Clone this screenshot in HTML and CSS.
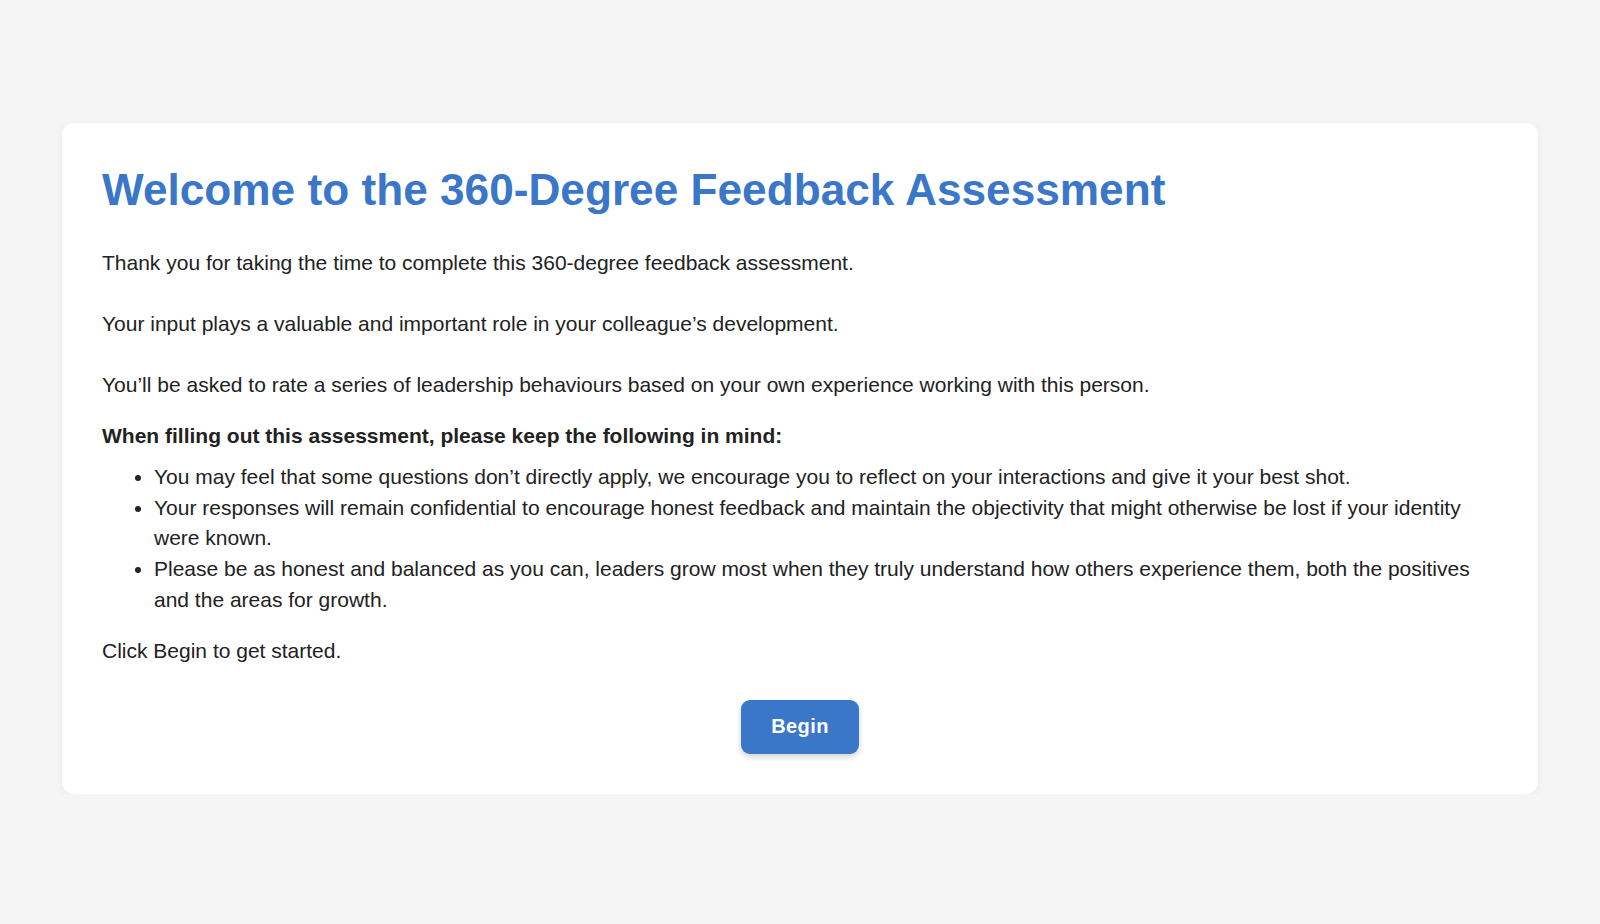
FILE: index.html
```html
<!DOCTYPE html>
<html lang="en">
<head>
<meta charset="utf-8">
<title>360-Degree Feedback Assessment</title>
<link rel="stylesheet" href="styles.css">
</head>
<body>
<main class="page">
  <section class="card">
    <h1 class="title">Welcome to the 360-Degree Feedback Assessment</h1>
    <p class="para">Thank you for taking the time to complete this 360-degree feedback assessment.</p>
    <p class="para">Your input plays a valuable and important role in your colleague’s development.</p>
    <p class="para para-last">You’ll be asked to rate a series of leadership behaviours based on your own experience working with this person.</p>
    <p class="lead">When filling out this assessment, please keep the following in mind:</p>
    <ul class="notes">
      <li>You may feel that some questions don’t directly apply, we encourage you to reflect on your interactions and give it your best shot.</li>
      <li>Your responses will remain confidential to encourage honest feedback and maintain the objectivity that might otherwise be lost if your identity were known.</li>
      <li>Please be as honest and balanced as you can, leaders grow most when they truly understand how others experience them, both the positives and the areas for growth.</li>
    </ul>
    <p class="cta-text">Click Begin to get started.</p>
    <div class="actions">
      <button class="begin" type="button">Begin</button>
    </div>
  </section>
</main>
</body>
</html>
```
FILE: styles.css
```css
html, body {
  margin: 0;
  padding: 0;
}
body {
  background: #f5f5f5;
  font-family: "Liberation Sans", Arial, Helvetica, sans-serif;
  color: #222222;
}
.page {
  padding: 123px 62px 0;
}
.card {
  background: #ffffff;
  border-radius: 12px;
  box-shadow: 0 2px 10px rgba(0, 0, 0, 0.06);
  padding: 40px 40px 40px 40px;
}
.title {
  margin: 0 0 31px;
  font-size: 44.2px;
  line-height: 54px;
  font-weight: 700;
  color: #3a77c9;
}
.para {
  margin: 0 0 30.6px;
  font-size: 21px;
  line-height: 30.6px;
}
.para-last {
  margin-bottom: 20.4px;
}
.lead {
  margin: 0 0 10.2px;
  font-size: 21px;
  line-height: 30.6px;
  font-weight: 700;
}
.notes {
  margin: 0 0 21px;
  padding-left: 52px;
  font-size: 21px;
  line-height: 30.6px;
}
.cta-text {
  margin: 0 0 33px;
  font-size: 21px;
  line-height: 30.6px;
}
.actions {
  display: flex;
  justify-content: center;
}
.begin {
  width: 118px;
  height: 54px;
  border: 0;
  border-radius: 9px;
  background: #3a77c9;
  color: #ffffff;
  font-family: "Liberation Sans", Arial, Helvetica, sans-serif;
  font-size: 20px;
  font-weight: 700;
  letter-spacing: 0.4px;
  box-shadow: 0 3px 6px rgba(0, 0, 0, 0.18);
  cursor: pointer;
}
```
